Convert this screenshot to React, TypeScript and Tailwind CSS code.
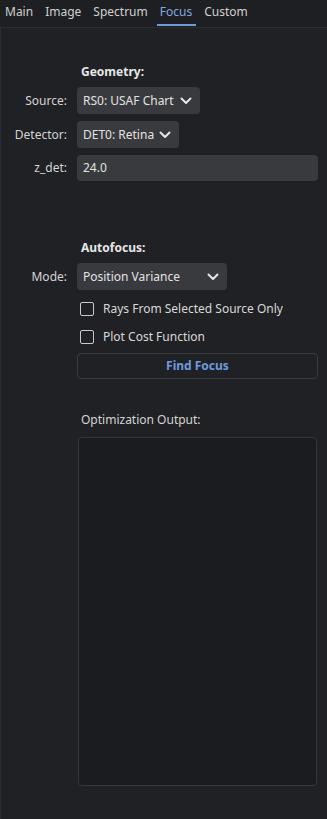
import React from "react";

const Chevron = () => (
  <svg width="12" height="8" viewBox="0 0 12 8" fill="none" className="shrink-0">
    <path d="M1.5 1.5 L6 6 L10.5 1.5" stroke="#e6e6e6" strokeWidth="2" strokeLinecap="round" strokeLinejoin="round" />
  </svg>
);

const Select = ({ text, w }: { text: string; w: string }) => (
  <div className={`${w} h-[27px] rounded-[4px] bg-[#393a3d] flex items-center justify-between pl-[6px] pr-[8px] text-[#e2e2e2]`}>
    <span>{text}</span>
    <Chevron />
  </div>
);

const Row = ({ label, children }: { label: string; children: React.ReactNode }) => (
  <div className="flex items-center">
    <div className="w-[66px] text-right text-[#d4d4d4]">{label}</div>
    <div className="ml-[10px] flex-1 flex">{children}</div>
  </div>
);

const Check = ({ text }: { text: string }) => (
  <div className="flex items-center h-[14px] pl-[79px]">
    <div className="w-[14px] h-[14px] rounded-[2px] border-[1.5px] border-[#c8c8c8]" />
    <span className="ml-[9px] text-[#d8d8d8]">{text}</span>
  </div>
);

export default function App() {
  const tabs = ["Main", "Image", "Spectrum", "Focus", "Custom"];
  return (
    <div
      className="w-[327px] h-[819px] bg-[#1e1f22] flex flex-col text-[12px] leading-none"
      style={{ fontFamily: '"Noto Sans", "Open Sans", sans-serif' }}
    >
      <div className="h-[27px] flex pl-[5px] gap-[12px] shrink-0">
        {tabs.map((t) => (
          <div key={t} className="relative flex items-start pt-[6px]">
            <span className={t === "Focus" ? "text-[#85a7e0]" : "text-[#d0d0d0]"}>{t}</span>
            {t === "Focus" && (
              <div className="absolute left-[-3px] right-[-4px] top-[24px] h-[2px] bg-[#7197dc]" />
            )}
          </div>
        ))}
      </div>
      <div className="flex-1 bg-[#202124] border-t border-l border-[#2c2d31] flex flex-col pr-[9px]">
        <div className="pl-[80px] pt-[38px] font-bold text-[#e6e6e6]">Geometry:</div>
        <div className="mt-[9px] flex flex-col gap-[7px]">
          <Row label="Source:">
            <Select text="RS0: USAF Chart" w="w-[123px]" />
          </Row>
          <Row label="Detector:">
            <Select text="DET0: Retina" w="w-[102px]" />
          </Row>
          <Row label="z_det:">
            <div className="flex-1 h-[26px] rounded-[4px] bg-[#393a3d] flex items-center pl-[6px] text-[#e2e2e2]">24.0</div>
          </Row>
        </div>
        <div className="pl-[80px] mt-[61px] font-bold text-[#e6e6e6]">Autofocus:</div>
        <div className="mt-[9px]">
          <Row label="Mode:">
            <Select text="Position Variance" w="w-[150px]" />
          </Row>
        </div>
        <div className="mt-[12px] flex flex-col gap-[14px]">
          <Check text="Rays From Selected Source Only" />
          <Check text="Plot Cost Function" />
        </div>
        <div className="mt-[9px] ml-[76px] h-[26px] rounded-[4px] border border-[#3a3b3f] flex items-center justify-center font-bold text-[#6f9ae0]">
          Find Focus
        </div>
        <div className="pl-[80px] mt-[35px] text-[#d4d4d4]">Optimization Output:</div>
        <div className="mt-[11px] ml-[77px] mr-[1px] h-[349px] rounded-[4px] border border-[#36373b] bg-[#1b1c1f]" />
      </div>
    </div>
  );
}
